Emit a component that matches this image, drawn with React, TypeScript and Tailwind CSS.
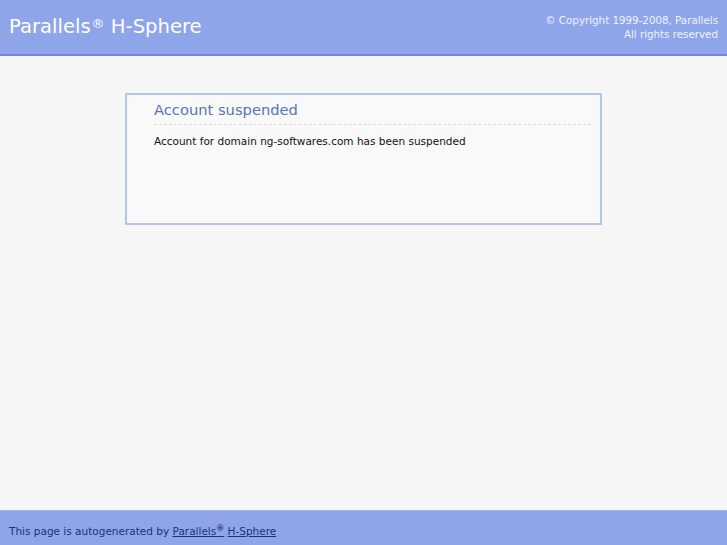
import React from 'react';

const font = { fontFamily: '"DejaVu Sans", Verdana, sans-serif' };

export default function App() {
  return (
    <div className="flex flex-col h-[545px] w-full bg-[#f6f6f6] overflow-hidden" style={font}>
      {/* header */}
      <div className="flex justify-between h-[56px] bg-[#8fa5ea] border-b-2 border-[#7088df] shrink-0">
        <div className="pl-[9px] pt-[14px] text-[19.6px] text-white leading-[26px]">
          Parallels<sup className="text-[13px] relative -top-[5px] ml-[1px]">®</sup> H-Sphere
        </div>
        <div className="pr-[9px] pt-[13px] text-[10.3px] leading-[14px] text-right text-[#f0f3ff]">
          <div>© Copyright 1999-2008, Parallels</div>
          <div>All rights reserved</div>
        </div>
      </div>

      {/* content */}
      <div className="flex-1 pt-[37px]">
        <div className="ml-[125px] w-[477px] h-[132px] border-2 border-[#b3c6ea] bg-[#f9f9f9] pl-[27px] pr-[9px]">
          <div className="pt-[6px] text-[14.7px] leading-[18px] text-[#5774bb]">Account suspended</div>
          <div className="mt-[5px] border-t border-dashed border-[#dadada]" />
          <div className="mt-[9px] text-[10.5px] leading-[14px] text-[#111]">
            Account for domain ng-softwares.com has been suspended
          </div>
        </div>
      </div>

      {/* footer */}
      <div className="h-[35px] shrink-0 bg-[#8fa5ea] border-t border-[#a3b5ee] pl-[9px] pt-[13px] text-[10.5px] leading-[14px] text-[#1d2f7f]">
        This page is autogenerated by{' '}
        <a href="#" className="underline">Parallels<sup className="text-[8px] font-bold">®</sup></a>{' '}
        <a href="#" className="underline">H-Sphere</a>
      </div>
    </div>
  );
}
